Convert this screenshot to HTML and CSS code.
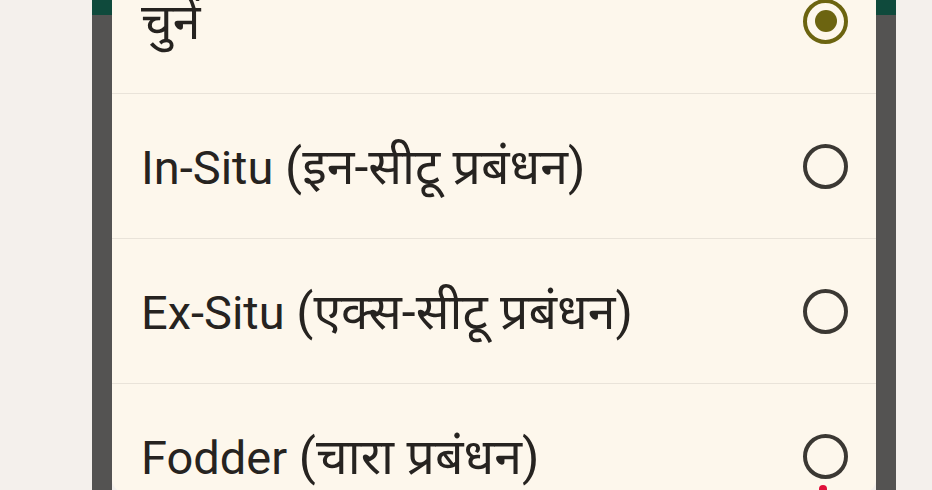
FILE: index.html
```html
<!DOCTYPE html>
<html lang="hi">
<head>
<meta charset="utf-8">
<title>चुनें</title>
<link rel="stylesheet" href="styles.css">
</head>
<body>
<div class="screen">
  <div class="side side-left"></div>
  <div class="strip"><div class="strip-top"></div></div>
  <div class="dialog">
    <ul class="options">
      <li class="option">
        <span class="label"><span class="deva">चुनें</span></span>
        <span class="radio checked"><span class="dot"></span></span>
      </li>
      <li class="option">
        <span class="label">In-Situ <span class="deva">(इन-सीटू प्रबंधन)</span></span>
        <span class="radio"></span>
      </li>
      <li class="option">
        <span class="label">Ex-Situ <span class="deva">(एक्स-सीटू प्रबंधन)</span></span>
        <span class="radio"></span>
      </li>
      <li class="option last">
        <span class="label">Fodder <span class="deva">(चारा प्रबंधन)</span></span>
        <span class="radio"></span>
      </li>
    </ul>
    <span class="red-mark"></span>
  </div>
  <div class="strip"><div class="strip-top"></div></div>
  <div class="side side-right"></div>
</div>
</body>
</html>
```
FILE: styles.css
```css
html, body {
  margin: 0;
  padding: 0;
  width: 932px;
  height: 490px;
  overflow: hidden;
  background: #f4f0ec;
}
.screen {
  display: flex;
  width: 932px;
  height: 490px;
  overflow: hidden;
}
.side {
  background: #f4f0ec;
}
.side-left { width: 92px; flex: none; }
.side-right { flex: 1; }
.strip {
  width: 20px;
  flex: none;
  background: #545352;
  display: flex;
  flex-direction: column;
}
.strip-top {
  height: 15px;
  background: #0f4a3c;
}
.dialog {
  position: relative;
  width: 764px;
  flex: none;
  height: 544px;
  margin-top: -51px;
  background: #fdf7ec;
  border-radius: 0 0 14px 14px;
  overflow: hidden;
}
.options {
  list-style: none;
  margin: 0;
  padding: 0;
}
.option {
  height: 144px;
  border-bottom: 1px solid #e9e3d9;
  display: flex;
  align-items: center;
  justify-content: space-between;
  padding: 0 28px 0 29px;
  box-sizing: content-box;
}
.option.last { border-bottom: none; }
.label {
  font-family: Roboto, "Noto Sans", "Noto Sans Devanagari", sans-serif;
  font-size: 47px;
  color: #262320;
  line-height: 1;
  padding-top: 2px;
  white-space: nowrap;
}
.deva {
  font-size: 50px;
}
.radio {
  width: 37px;
  height: 37px;
  border: 4.5px solid #3b3833;
  border-radius: 50%;
  display: flex;
  align-items: center;
  justify-content: center;
  flex: none;
}
.radio.checked {
  border-color: #6c6410;
}
.dot {
  width: 22px;
  height: 22px;
  border-radius: 50%;
  background: #6c6410;
}
.red-mark {
  position: absolute;
  left: 707px;
  top: 536px;
  width: 8px;
  height: 8px;
  border-radius: 50%;
  background: #e0103a;
}
```
